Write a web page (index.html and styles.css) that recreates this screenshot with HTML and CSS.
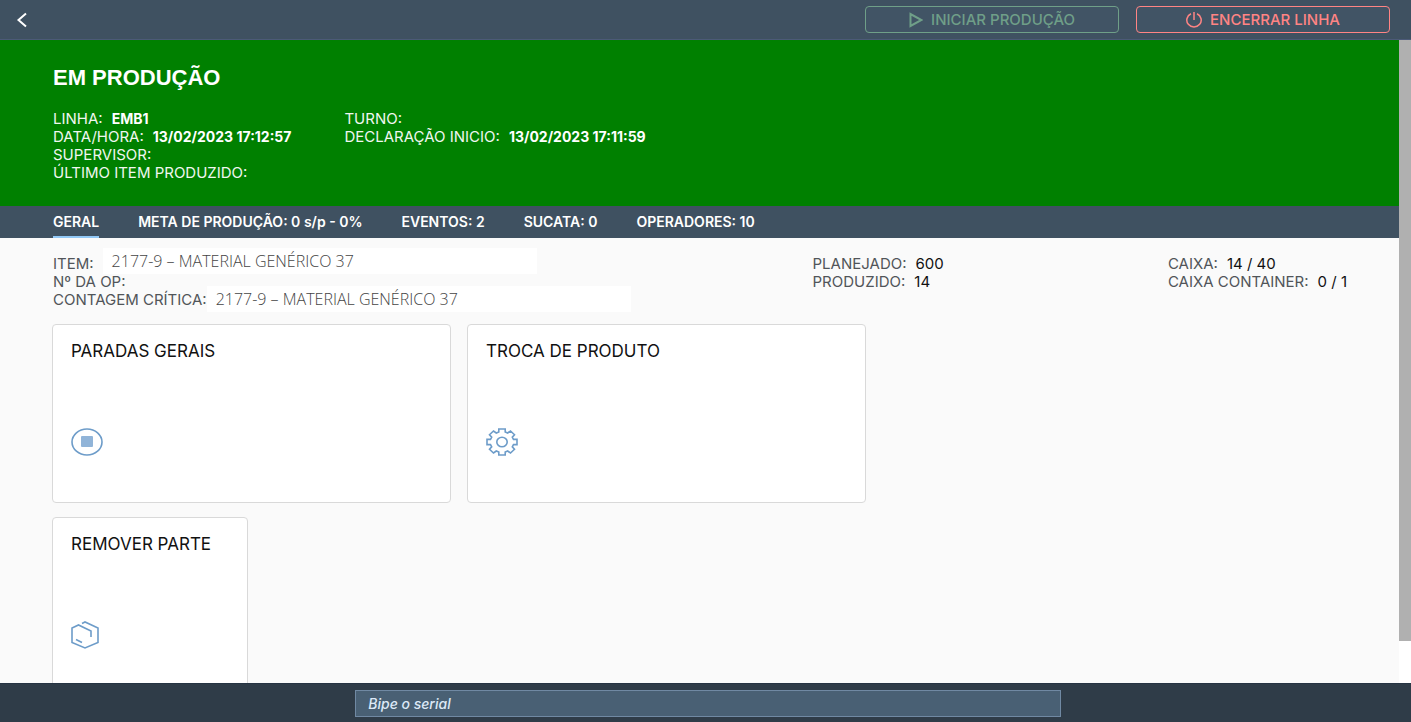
FILE: index.html
```html
<!DOCTYPE html>
<html lang="pt-BR">
<head>
<meta charset="utf-8">
<meta name="viewport" content="width=device-width, initial-scale=1">
<title>Em produção</title>
<link rel="stylesheet" href="styles.css">
</head>
<body>
<header class="topbar">
  <button class="back" type="button" aria-label="Voltar">
    <svg width="12" height="16" viewBox="0 0 12 16"><path d="M10 1.5 2.5 8 10 14.5"/></svg>
  </button>
  <div class="topbar-actions">
    <button class="action action-start" type="button">
      <svg width="14" height="16" viewBox="0 0 14 16"><path d="M1.5 2v12L12.5 8z"/></svg>
      INICIAR PRODUÇÃO
    </button>
    <button class="action action-stop" type="button">
      <svg width="16" height="16" viewBox="0 0 16 16"><path d="M5 1.800a7.200 6.900 0 1 0 6 0M8 0v8"/></svg>
      ENCERRAR LINHA
    </button>
  </div>
</header>
<div class="viewport">
  <main class="content">
    <section class="status">
      <h1 class="status-title">EM PRODUÇÃO</h1>
      <div class="status-info">
        <dl class="fields">
          <div class="field"><dt>LINHA:</dt><dd>EMB1</dd></div>
          <div class="field"><dt>DATA/HORA:</dt><dd>13/02/2023 17:12:57</dd></div>
          <div class="field"><dt>SUPERVISOR:</dt><dd></dd></div>
          <div class="field"><dt>ÚLTIMO ITEM PRODUZIDO:</dt><dd></dd></div>
        </dl>
        <dl class="fields">
          <div class="field"><dt>TURNO:</dt><dd></dd></div>
          <div class="field"><dt>DECLARAÇÃO INICIO:</dt><dd>13/02/2023 17:11:59</dd></div>
        </dl>
      </div>
    </section>
    <nav class="tabs">
      <a class="tab tab-active" href="#geral">GERAL</a>
      <a class="tab" href="#meta">META DE PRODUÇÃO: 0 s/p - 0%</a>
      <a class="tab" href="#eventos">EVENTOS: 2</a>
      <a class="tab" href="#sucata">SUCATA: 0</a>
      <a class="tab" href="#operadores">OPERADORES: 10</a>
    </nav>
    <section class="general" id="geral">
      <div class="summary">
        <dl class="fields">
          <div class="field"><dt>ITEM:</dt><dd class="material">2177-9 – MATERIAL GENÉRICO 37</dd></div>
          <div class="field"><dt>Nº DA OP:</dt><dd></dd></div>
          <div class="field field-tight"><dt>CONTAGEM CRÍTICA:</dt><dd class="material">2177-9 – MATERIAL GENÉRICO 37</dd></div>
        </dl>
        <dl class="fields">
          <div class="field"><dt>PLANEJADO:</dt><dd>600</dd></div>
          <div class="field"><dt>PRODUZIDO:</dt><dd>14</dd></div>
        </dl>
        <dl class="fields">
          <div class="field"><dt>CAIXA:</dt><dd>14 / 40</dd></div>
          <div class="field"><dt>CAIXA CONTAINER:</dt><dd>0 / 1</dd></div>
        </dl>
      </div>
      <div class="tiles">
        <button class="tile tile-wide" type="button">
          <span>PARADAS GERAIS</span>
          <svg width="32" height="28" viewBox="0 0 32 28"><ellipse cx="16" cy="14" rx="15" ry="13"/><rect class="solid" x="10" y="8" width="12" height="11" rx="1"/></svg>
        </button>
        <button class="tile tile-wide" type="button">
          <span>TROCA DE PRODUTO</span>
          <svg width="32" height="28" viewBox="0 0 32 28"><path d="M12.8 1h6.4v3l2.500 1 2.800-2 4 3.700-2.200 2.500 1.200 2.200H31v5.200h-3.500l-1.200 2.200 2.200 2.500-4 3.700-2.800-2-2.500 1v3h-6.400v-3l-2.500-1-2.800 2-4-3.700 2.200-2.500-1.200-2.200H1v-5.200h3.500l1.200-2.200-2.200-2.500 4-3.700 2.800 2 2.500-1z"/><ellipse cx="16" cy="14" rx="5.2" ry="4.8"/></svg>
        </button>
        <button class="tile" type="button">
          <span>REMOVER PARTE</span>
          <svg width="28" height="28" viewBox="0 0 28 28"><path d="M11 2.500 14 1l13 6v14.500L14 27 1 21.500V7L7.500 4l12.500 6v6M5 18.500l6 3"/></svg>
        </button>
      </div>
    </section>
  </main>
  <div class="scrollbar" aria-hidden="true"><div class="scrollbar-thumb"></div></div>
</div>
<footer class="scanbar">
  <input class="scan-input" type="text" placeholder="Bipe o serial" aria-label="Bipe o serial">
</footer>
</body>
</html>
```
FILE: styles.css
```css
* {
  box-sizing: border-box;
}

body {
  margin: 0;
  height: 100vh;
  display: flex;
  flex-direction: column;
  font: 15px/18px Inter, "Liberation Sans", sans-serif;
  color: #32363a;
  background: #fafafa;
}

button,
input {
  font: inherit;
}

svg {
  fill: none;
  stroke: currentColor;
  stroke-width: 2;
}

dl,
dd,
h1 {
  margin: 0;
}

.topbar {
  display: flex;
  align-items: center;
  justify-content: space-between;
  padding: 6px 21px 6px 16px;
  background: #3f5161;
  border-bottom: 1px solid #4c5a78;
}

.back {
  display: flex;
  padding: 0;
  border: 0;
  background: none;
  color: #fff;
}

.topbar-actions {
  display: flex;
  gap: 17px;
}

.action {
  display: flex;
  align-items: center;
  justify-content: center;
  gap: 8px;
  width: 18vw;
  height: 27px;
  padding: 0;
  border: 1px solid;
  border-radius: 4px;
  background: #415465;
  font-weight: 500;
}

.action svg {
  stroke-width: 1.5;
}

.action-start {
  color: #6f9f88;
}

.action-start svg {
  stroke-width: 2;
}

.action-stop {
  color: #ff8484;
}

.viewport {
  flex: 1;
  min-height: 0;
  display: flex;
}

.content {
  flex: 1;
  overflow-y: auto;
  scrollbar-width: none;
}

.scrollbar {
  width: 12px;
  background: #fff;
}

.scrollbar-thumb {
  height: 93.5%;
  background: #b0b0b0;
}

.status {
  padding: 25px 53px 24px;
  background: #008000;
  color: #fff;
}

.status-title {
  margin-bottom: 20px;
  font: bold 22px/25px "Liberation Sans", sans-serif;
}

.status-info {
  display: flex;
  gap: 53px;
}

.field {
  display: flex;
  gap: 9px;
}

.field-tight {
  gap: 0;
}

.status dt {
  color: #f0f7f0;
}

.status dd {
  font-size: 14px;
  font-weight: 700;
}

.tabs {
  display: flex;
  gap: 39px;
  padding: 0 53px;
  background: #3f5161;
}

.tab {
  padding: 7px 0 5px;
  border-bottom: 2px solid transparent;
  color: #fff;
  font-size: 14px;
  font-weight: 600;
  text-decoration: none;
}

.tab-active {
  border-color: #91c8f6;
}

.general {
  padding: 17px 52px;
}

.summary {
  display: grid;
  grid-template-columns: 763fr 357fr 174fr;
  margin-bottom: 15px;
  padding-left: 1px;
  white-space: nowrap;
}

.summary dt {
  color: #515559;
}

.summary dd {
  color: #111;
}

.summary .material {
  flex: 0 1 434px;
  margin: -7px 0 -1px;
  padding: 0 9px;
  background: #fff;
  color: #444;
  font: 300 16px/26px "Open Sans", "Noto Sans", sans-serif;
}

.summary .field-tight .material {
  flex-basis: 424px;
  margin: -5px 0 -3px;
}

.tiles {
  display: flex;
  flex-wrap: wrap;
  gap: 14px 16px;
  max-width: 1000px;
}

.tile {
  display: flex;
  flex-direction: column;
  justify-content: space-between;
  align-items: flex-start;
  width: 196px;
  height: 179px;
  padding: 16px 18px 46px;
  border: 1px solid #d9d9d9;
  border-radius: 4px;
  background: #fff;
  color: #111;
  font-size: 17px;
  line-height: 20px;
}

.tile-wide {
  width: 399px;
}

.tile svg {
  color: #6d9cc9;
  stroke-width: 1.6;
}

.tile .solid {
  fill: #91b4d8;
  stroke: none;
}

.scanbar {
  display: flex;
  justify-content: center;
  padding: 6px 0 5px 5px;
  border-top: 1px solid #263443;
  background: #2f3c48;
}

.scan-input {
  width: 50vw;
  height: 27px;
  padding: 0 12px;
  border: 1px solid #7089a3;
  border-radius: 0;
  background: #496074;
  color: #fff;
  font-size: 14px;
}

.scan-input::placeholder {
  color: #dce9f7;
  font-style: italic;
  font-weight: 500;
  opacity: 1;
}
```
